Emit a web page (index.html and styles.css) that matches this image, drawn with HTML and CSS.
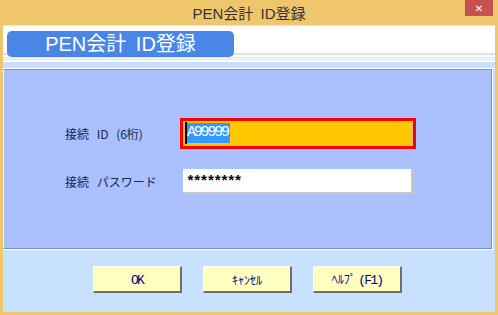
FILE: index.html
```html
<!DOCTYPE html>
<html lang="ja">
<head>
    <meta charset="UTF-8">
    <title>PEN会計 ID登録</title>
    <link rel="stylesheet" href="styles.css">
</head>
<body>
    <div class="window">
        <!-- Title bar -->
        <div class="titlebar">
            <span class="title">PEN会計 ID登録</span>
            <span class="close">&#x2715;</span>
        </div>

        <div class="client">
            <div class="header">
                <div class="pill">PEN会計 ID登録</div>
            </div>

            <div class="panel">
                <div class="form">
                    <label class="label">接続 ID (6桁)</label>
                    <div class="field field-focus">
                        <span class="caret"></span><span class="sel">A99999</span>
                    </div>

                    <label class="label">接続 パスワード</label>
                    <div class="field field-pass">********</div>
                </div>
            </div>

            <div class="footer">
                <button class="btn"><span class="hw">OK</span></button>
                <button class="btn">ｷｬﾝｾﾙ</button>
                <button class="btn">ﾍﾙﾌﾟ <span class="hw">(F1)</span></button>
            </div>
        </div>
    </div>
</body>
</html>
```

FILE: styles.css
```css
* {
    margin: 0;
    padding: 0;
    box-sizing: border-box;
}

body {
    width: 498px;
    height: 315px;
    overflow: hidden;
    background: #efc66b;
    font-family: "Noto Sans CJK JP", sans-serif;
}

.window {
    height: 315px;
    display: flex;
    flex-direction: column;
    padding: 0 3px 3px 3px;
}

.titlebar {
    position: relative;
    height: 25px;
    display: flex;
    justify-content: center;
    align-items: center;
    padding-bottom: 1px;
}

.title {
    font-family: "Liberation Sans", "Noto Sans CJK JP", sans-serif;
    font-size: 15px;
    word-spacing: 3px;
    color: #333;
}

.close {
    position: absolute;
    top: 0;
    right: 2px;
    width: 28px;
    height: 16px;
    background: #c75050;
    color: #fff;
    font-family: "DejaVu Sans", sans-serif;
    font-size: 10px;
    font-weight: bold;
    display: flex;
    justify-content: center;
    align-items: center;
}

.client {
    flex: 1;
    display: flex;
    flex-direction: column;
    background: #c8e1ff;
    border-top: 1px solid #dbe6ee;
}

.header {
    height: 43px;
    padding: 5px 0 0 4px;
    background: linear-gradient(to bottom,
        #fff 0, #fff 27px,
        #cfe3fb 27px, #cfe3fb 29px,
        #fff 29px, #fff 31px,
        #cfe3fb 31px, #cfe3fb 32px,
        #fff 32px, #fff 33px,
        #cfe3fb 33px, #cfe3fb 34px,
        #fff 34px, #fff 36px,
        #c8e0ff 36px, #c8e0ff 42px,
        #fff 42px);
}

.pill {
    width: 227px;
    height: 26px;
    border-radius: 5px;
    background: #4a86e8;
    color: #fff;
    font-family: "Liberation Sans", "Noto Sans CJK JP", sans-serif;
    font-size: 20px;
    word-spacing: 4px;
    line-height: 26px;
    text-align: center;
}

.panel {
    height: 180px;
    margin-right: 3px;
    background: #aac0ff;
    border-top: 1px solid #8090b0;
    border-right: 1px solid #7f8fb0;
    border-bottom: 1px solid #7f8fb0;
    border-left: 1px solid #fff;
    box-shadow: 1px 1px 0 #fff;
    padding: 51px 0 0 61px;
}

.form {
    display: grid;
    grid-template-columns: 118px 230px;
    row-gap: 23px;
    align-items: center;
}

.label {
    font-size: 12px;
    word-spacing: 5px;
    color: #14284a;
}

.field {
    height: 25px;
    display: flex;
    align-items: center;
}

.field-focus {
    background: #ffc800;
    outline: 3px solid #ff0000;
    border-bottom: 1px solid #c8c0a0;
    border-right: 1px solid #c8c0a0;
    padding-left: 2px;
}

.caret {
    width: 2px;
    height: 22px;
    background: #000;
}

.sel {
    height: 20px;
    line-height: 20px;
    padding-right: 2px;
    background: #3399ff;
    color: #fff;
    font-family: "Liberation Mono", monospace;
    font-size: 15px;
    letter-spacing: -2.2px;
}

.field-pass {
    background: #fff;
    border-right: 2px solid #c8c8c8;
    border-bottom: 2px solid #c8c8c8;
    padding: 3px 0 0 3px;
    font-family: "Liberation Mono", monospace;
    font-size: 15px;
    font-weight: bold;
    letter-spacing: -2.2px;
    color: #000;
}

.footer {
    flex: 1;
    display: flex;
    justify-content: center;
    align-items: flex-start;
    gap: 21px;
    padding: 17px 3px 0 0;
}

.btn {
    width: 89px;
    height: 27px;
    background: #ffffc0;
    border-top: 1px solid #fff;
    border-left: 1px solid #fff;
    border-right: 2px solid #6f6f6f;
    border-bottom: 2px solid #6f6f6f;
    color: #00008b;
    font-family: "Noto Sans CJK JP", sans-serif;
    font-size: 12px;
}

.hw {
    font-family: "Liberation Mono", monospace;
    font-size: 13px;
    letter-spacing: -1.8px;
}
```
